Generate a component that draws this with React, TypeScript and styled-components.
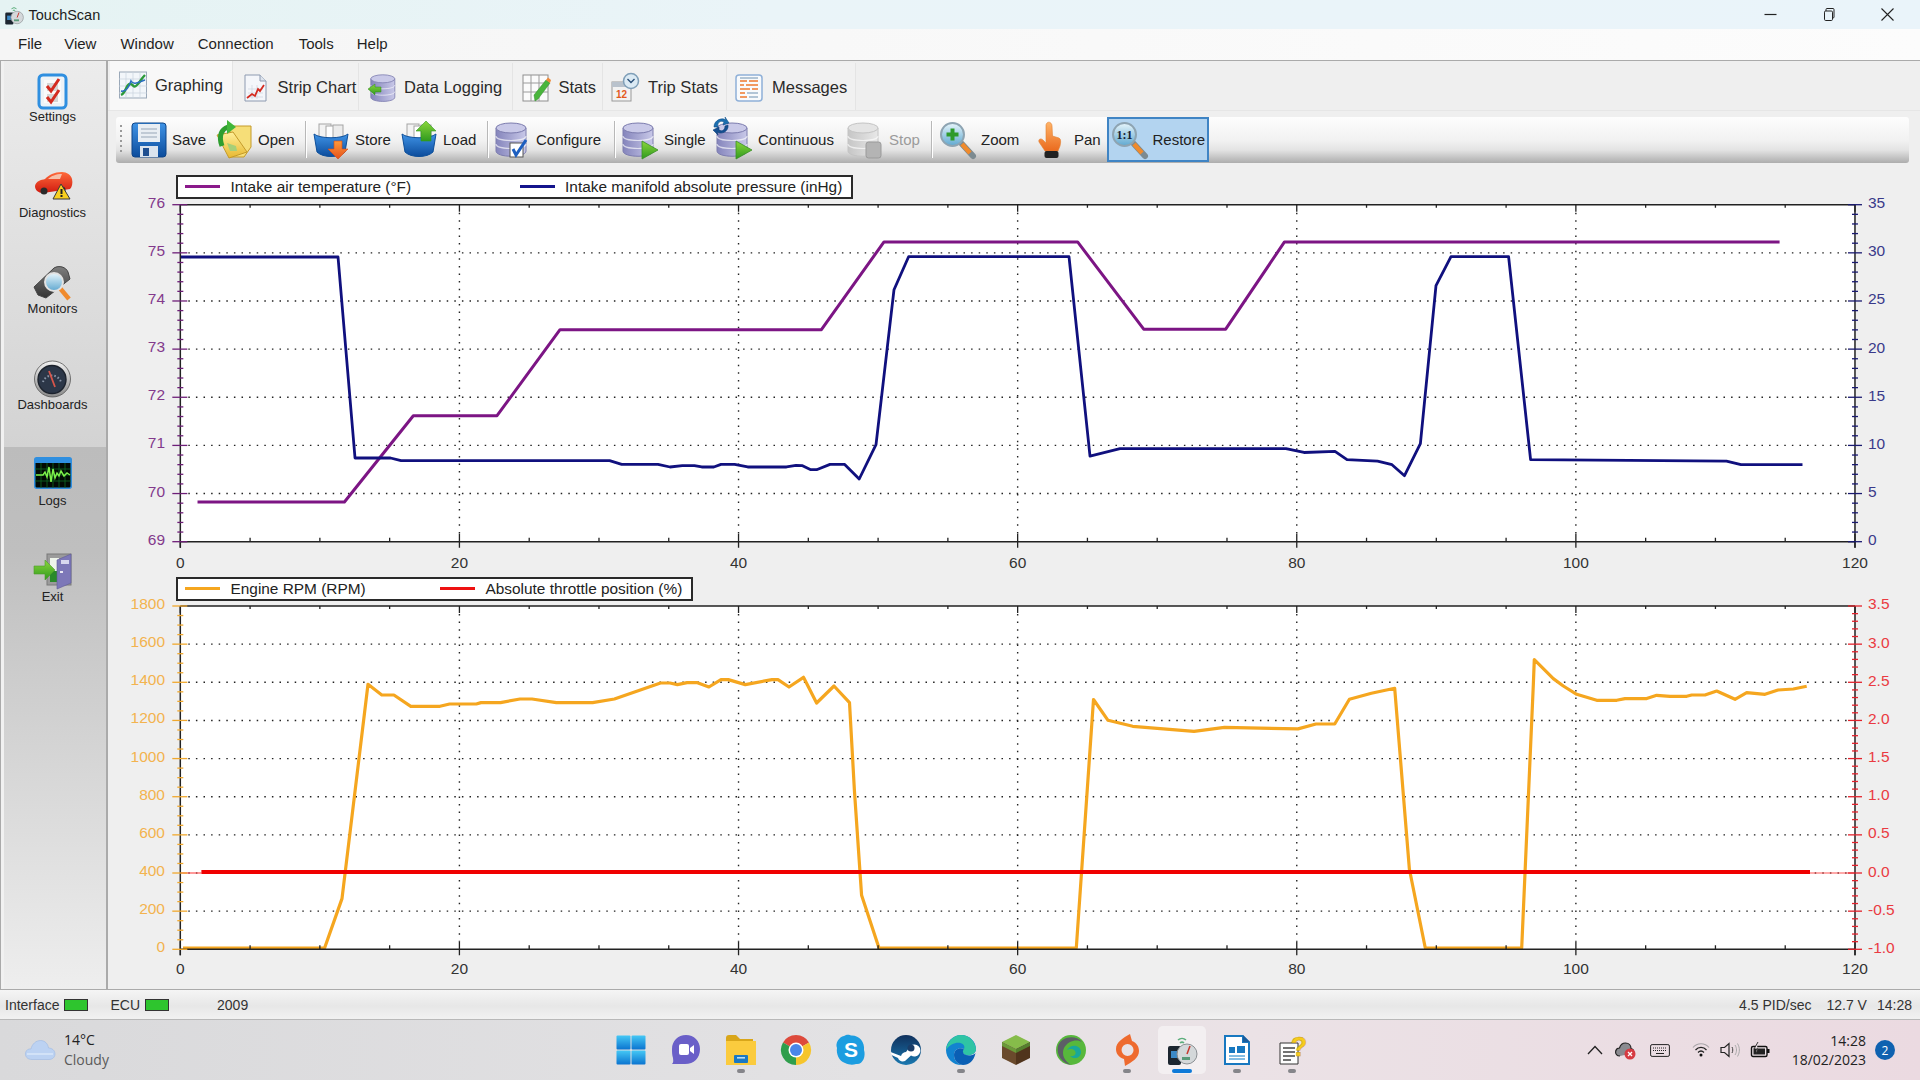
import React from "react";
import styled, { createGlobalStyle } from "styled-components";

const GlobalStyle = createGlobalStyle`
  html, body {
    margin: 0;
    padding: 0;
    width: 1920px;
    height: 1080px;
    overflow: hidden;
    font-family: "Liberation Sans", Arial, sans-serif;
    color: #222;
  }
  * { box-sizing: border-box; }
`;

/* ---------- icons ---------- */

const IconSvg = styled.svg`
  display: block;
  flex-shrink: 0;
  overflow: visible;
`;

const Ico = ({ w = 36, h = 36, box = "0 0 36 36", children }: any) => (
  <IconSvg width={w} height={h} viewBox={box}>
    {children}
  </IconSvg>
);

const DefsHolder = styled.svg`
  position: absolute;
  width: 0;
  height: 0;
`;

const grad = (id: string, a: string, b: string, horizontal = false) => (
  <linearGradient id={id} x1="0" y1="0" x2={horizontal ? "1" : "0"} y2={horizontal ? "0" : "1"}>
    <stop offset="0" stopColor={a} />
    <stop offset="1" stopColor={b} />
  </linearGradient>
);

const IconDefs = () => (
  <DefsHolder>
    <defs>
      {grad("gBlue", "#3f93e6", "#0c4c9c")}
      {grad("gLav", "#8585bc", "#c8c8e8", true)}
      {grad("gGray", "#c6c6c6", "#e8e8e8", true)}
      {grad("gGreen", "#8bd63c", "#2f9a1e")}
      {grad("gGold", "#fff09a", "#e8b830")}
      {grad("gOrange", "#ff9a3c", "#e4501a")}
      {grad("gHand", "#ffb468", "#ea6a1e")}
      {grad("gGlass", "#e8f6fc", "#5fa8d0")}
      {grad("gRed", "#ff6a3a", "#d01a10")}
      {grad("gWin", "#45c8f5", "#0b74d0")}
      {grad("gMetal", "#f2f2f2", "#8a8a8a")}
      {grad("gDark", "#7e7e7e", "#343434")}
      {grad("gEdge", "#35c1a0", "#0a63b8")}
      {grad("gSteam", "#10305c", "#1a78b0")}
    </defs>
  </DefsHolder>
);

const Db = ({ fill = "url(#gLav)", top = "#c9c9e8", stroke = "#7c7cae" }: any) => (
  <g>
    <path d="M1 6V29C1 36 31 36 31 29V6Z" fill={fill} stroke={stroke} />
    <path d="M1 14C1 20 31 20 31 14M1 22C1 28 31 28 31 22" fill="none" stroke="#fff" strokeOpacity=".65" strokeWidth="1.2" />
    <ellipse cx="16" cy="6" rx="15" ry="5" fill={top} stroke={stroke} />
  </g>
);

const SaveIcon = () => (
  <Ico>
    <rect x="1" y="1" width="34" height="34" rx="3" fill="url(#gBlue)" stroke="#0d4488" />
    <rect x="7" y="2" width="22" height="18" fill="#e9eef3" />
    <path d="M10 7h16M10 11h16M10 15h16" stroke="#b2bfcc" strokeWidth="1.6" />
    <rect x="9" y="24" width="18" height="11" fill="#dbe4ee" />
    <rect x="12" y="26" width="6" height="8" fill="#1f4f90" />
  </Ico>
);

const OpenIcon = () => (
  <Ico>
    <path d="M14 4H35V25L28 35H13Z" fill="#f6de78" stroke="#c49a2a" />
    <path d="M1 13L17 10L31 30L13 36Z" fill="url(#gGold)" stroke="#c49a2a" />
    <path d="M11 21L20 24L21 29L14 29Z" fill="#a6cf78" />
    <path d="M6 24C2 13 6 7 12 5" fill="none" stroke="#2f9e2f" strokeWidth="5" />
    <path d="M11-2L20 5L11 12Z" fill="#41b63a" />
  </Ico>
);

const Basket = () => (
  <g>
    <rect x="6" y="2" width="12" height="15" fill="#f3f3f3" stroke="#a5a5a5" />
    <rect x="13" y="4" width="12" height="13" fill="#fff" stroke="#a5a5a5" />
    <rect x="20" y="3" width="10" height="14" fill="#ececec" stroke="#a5a5a5" />
    <path d="M1 12C7 17 29 17 35 12L32 30C26 36 10 36 4 30Z" fill="url(#gBlue)" stroke="#0d4f9a" />
  </g>
);

const StoreIcon = () => (
  <Ico>
    <Basket />
    <path d="M21 19H29V27H35L25 37L15 27H21Z" fill="url(#gOrange)" stroke="#d84a14" strokeWidth=".6" />
  </Ico>
);

const LoadIcon = () => (
  <Ico>
    <Basket />
    <path d="M25-1L35 9H30V19H20V9H15Z" fill="url(#gGreen)" stroke="#2f9a1e" strokeWidth=".6" />
  </Ico>
);

const ConfigureIcon = () => (
  <Ico>
    <Db />
    <rect x="15" y="21" width="13" height="14" fill="#fff" stroke="#555" />
    <path d="M18 27L21 33L31 18" fill="none" stroke="#1d5fc0" strokeWidth="3" />
  </Ico>
);

const PlayMark = () => <path d="M20 19L36 28L20 37Z" fill="url(#gGreen)" stroke="#3a8f26" strokeWidth=".8" />;

const SingleIcon = () => (
  <Ico>
    <Db />
    <PlayMark />
  </Ico>
);

const ContinuousIcon = () => (
  <Ico>
    <Db />
    <PlayMark />
    <path d="M-2 5C-2-2 6-5 10-2L9-5L13 1L7 3L8 0C4-2 1 1 2 5Z" fill="#1c6fb0" stroke="#0e4f8a" strokeWidth=".6" />
    <path d="M12 3C13 9 6 13 1 10L2 13L-3 8L3 5L3 8C6 10 9 8 9 4Z" fill="#144f90" stroke="#0e3f7a" strokeWidth=".6" />
  </Ico>
);

const StopIcon = () => (
  <Ico>
    <Db fill="url(#gGray)" top="#e4e4e4" stroke="#c4c4c4" />
    <rect x="19" y="20" width="15" height="16" rx="2.5" fill="#b4b4b4" stroke="#9a9a9a" />
  </Ico>
);

const Lens = ({ children }: any) => (
  <g>
    <path d="M23 22L34 34" stroke="#7c8a90" strokeWidth="6" strokeLinecap="round" />
    <path d="M23 22L31 31" stroke="#f08a2c" strokeWidth="4.4" />
    <circle cx="13.5" cy="12.5" r="11.5" fill="url(#gGlass)" stroke="#8ea4b2" strokeWidth="2" />
    {children}
  </g>
);

const GlassText = styled.text`
  font-family: "Liberation Serif", serif;
  font-weight: 700;
  font-size: 12px;
  fill: #152034;
`;

const ZoomIcon = () => (
  <Ico>
    <Lens>
      <path d="M13.5 6.5V18.5M7.5 12.5H19.5" stroke="#2e9a2a" strokeWidth="4" />
    </Lens>
  </Ico>
);

const RestoreIcon = () => (
  <Ico>
    <Lens>
      <GlassText x="13.5" y="16.5" textAnchor="middle">
        1:1
      </GlassText>
    </Lens>
  </Ico>
);

const PanIcon = () => (
  <Ico>
    <path d="M15 1C17-1 20 1 20 4L20.5 14L27 16C29 17 29 20 28 24L26 29H13L7 20C6 17 9 16 11 18L14 21V4C14 3 14 2 15 1Z" fill="url(#gHand)" stroke="#e08030" strokeWidth=".6" />
    <rect x="12.5" y="29" width="14" height="7" rx="2" fill="#222" />
  </Ico>
);

const SettingsIcon = () => (
  <Ico>
    <rect x="4" y="2" width="27" height="33" rx="4" fill="#eef3f7" stroke="#2f8fe0" strokeWidth="3" />
    <rect x="9" y="7" width="17" height="23" fill="#fafafa" />
    <rect x="12" y="10" width="11" height="8" fill="#d6d6d6" />
    <rect x="12" y="21" width="11" height="8" fill="#d6d6d6" />
    <path d="M12 13L16 18L24 6M12 24L16 29L24 17" fill="none" stroke="#d42b20" strokeWidth="3" />
  </Ico>
);

const DiagnosticsIcon = () => (
  <Ico w={38} h={36} box="0 0 38 36">
    <path d="M1 17C2 12 7 11 11 10C15 6 20 3 28 3C33 3 37 6 38 10C39 14 38 18 36 20L9 24C4 24 1 21 1 17Z" fill="url(#gRed)" />
    <path d="M14 10C17 7 22 5 28 5L26 10Z" fill="#f6c0a8" />
    <circle cx="10" cy="22" r="3.5" fill="#2a2a2a" />
    <circle cx="28" cy="21" r="3.5" fill="#2a2a2a" />
    <path d="M27 15L36 30H19Z" fill="#f8d020" stroke="#3a3a3a" />
    <path d="M27.5 20V25M27.5 26V28" stroke="#222" strokeWidth="2" />
  </Ico>
);

const MonitorsIcon = () => (
  <Ico w={38} h={36} box="0 0 38 36">
    <path d="M0 22L20 3C25 0 32 2 34 7L36 14L12 33L4 30Z" fill="url(#gDark)" stroke="#444" />
    <path d="M25 22L35 34" stroke="#f08a2c" strokeWidth="4.5" />
    <circle cx="20" cy="17" r="9" fill="url(#gGlass)" stroke="#e2e2e2" strokeWidth="2" />
  </Ico>
);

const DashboardsIcon = () => (
  <Ico w={37} h={36} box="0 0 37 36">
    <circle cx="18.5" cy="18" r="18" fill="url(#gMetal)" stroke="#555" strokeWidth=".8" />
    <circle cx="18" cy="18.5" r="14" fill="#2c3748" stroke="#1c222c" strokeWidth="1.4" />
    <path d="M9 21A9.5 9.5 0 0 1 27 21" fill="none" stroke="#8a96a8" strokeWidth="2" strokeDasharray="1.5 2" />
    <path d="M15 10L21 26" stroke="#d8554a" strokeWidth="1.8" />
  </Ico>
);

const LogsIcon = () => (
  <Ico w={38} h={36} box="0 0 38 36">
    <rect x="0.75" y="0.75" width="36.5" height="30.5" rx="2" fill="#020a04" stroke="#2f8fe0" strokeWidth="1.5" />
    <rect x="1" y="1" width="36" height="5" fill="#2f8fe0" />
    <path d="M7 6V31M13 6V31M19 6V31M25 6V31M31 6V31M1 12H37M1 18H37M1 24H37" stroke="#0d6a24" strokeWidth=".8" />
    <path d="M2 18H9L11 15L13 20L15 10L17 25L19 12L21 21L23 16L25 19L27 14L30 19L33 16L36 18" fill="none" stroke="#7cf04a" strokeWidth="1.5" />
  </Ico>
);

const ExitIcon = () => (
  <Ico w={38} h={36} box="0 0 38 36">
    <rect x="13" y="1" width="24" height="31" fill="#9b9b9b" stroke="#7a7a7a" />
    <rect x="16" y="5" width="9" height="13" fill="#eef4ea" />
    <rect x="16" y="18" width="9" height="11" fill="#2a8a2a" />
    <path d="M23 7L37 1V30L23 36Z" fill="#7d78b8" stroke="#5f5a98" strokeWidth=".6" />
    <rect x="27" y="7" width="8" height="4" fill="#d8d8ee" />
    <rect x="26" y="18" width="3" height="2" fill="#e8e8f2" />
    <path d="M0 13H11V7L21 17L11 27V21H0Z" fill="url(#gGreen)" stroke="#4a9a2a" strokeWidth=".6" />
  </Ico>
);

const T = ({ children }: any) => (
  <Ico w={28} h={28} box="0 0 28 28">
    {children}
  </Ico>
);

const GraphingIcon = () => (
  <T>
    <rect x="0.5" y="1" width="27" height="26" fill="#f2f6fa" stroke="#9aa8b8" />
    <path d="M7 1V27M14 1V27M21 1V27M0 8H28M0 15H28M0 22H28" stroke="#c9d2dc" strokeWidth=".7" />
    <path d="M2 24C7 22 7 13 11 13C15 13 14 18 18 14C21 11 22 8 26 4" fill="none" stroke="#2c9a3a" strokeWidth="2.4" />
    <path d="M2 20C6 21 9 19 12 10C14 14 18 12 26 9" fill="none" stroke="#2a6fc0" strokeWidth="1.6" />
  </T>
);

const StripIcon = () => (
  <T>
    <path d="M4 1H19L25 7V27H4Z" fill="#f4f6fa" stroke="#8d9ab0" />
    <path d="M19 1V7H25" fill="#dde3ec" stroke="#8d9ab0" />
    <path d="M7 15H22M7 19H22M7 23H22M11 11V25M16 11V25" stroke="#c8d0dc" strokeWidth=".6" />
    <path d="M6 24L11 20L14 22L17 15L19 17L23 11" fill="none" stroke="#d42b20" strokeWidth="1.8" />
  </T>
);

const DataLogIcon = () => (
  <T>
    <g transform="translate(3 0) scale(.8)">
      <Db />
    </g>
    <path d="M1 15L8 10V13H14V18H8V21Z" fill="url(#gGreen)" stroke="#2f8a1e" strokeWidth=".5" />
  </T>
);

const StatsIcon = () => (
  <T>
    <rect x="1" y="1" width="25" height="26" fill="#fbfbfb" stroke="#8f8f8f" />
    <path d="M9 1V27M17 1V27M1 9H26M1 18H26" stroke="#9b9b9b" />
    <path d="M13 27L12 21L24 6L28 9L16 25Z" fill="#4ab53c" stroke="#2f8a28" strokeWidth=".5" />
    <path d="M24 6L26 3.5L29 6L28 9Z" fill="#ee8a3a" />
  </T>
);

const TripIcon = () => (
  <T>
    <rect x="1" y="8" width="19" height="19" fill="#f2f2f2" stroke="#9a9a9a" />
    <rect x="1" y="8" width="19" height="5" fill="#b9c2cc" />
    <text x="10.5" y="24" textAnchor="middle" fontSize="10" fontWeight="700" fontFamily="Liberation Sans" fill="#e4591e">
      12
    </text>
    <circle cx="20" cy="7" r="7.5" fill="#dbeaf4" stroke="#7f9fb8" strokeWidth="1.5" />
    <path d="M16.5 5L20 8.5L23.5 5" fill="none" stroke="#2a4f78" strokeWidth="1.4" />
  </T>
);

const MessagesIcon = () => (
  <T>
    <rect x="1" y="1" width="26" height="26" rx="3" fill="#f8fafc" stroke="#8fb0d8" strokeWidth="1.5" />
    <path d="M5 7H12M14 7H23M5 11H9M11 11H23M5 15H15M17 15H23M5 19H10M5 23H12" stroke="#ee7a2e" strokeWidth="1.5" />
    <path d="M5 4H23M12 19H23M14 23H23" stroke="#6d8fb0" strokeWidth="1.2" />
  </T>
);

const A = ({ children }: any) => (
  <Ico w={32} h={32} box="0 0 32 32">
    {children}
  </Ico>
);

const WinIcon = () => (
  <A>
    <rect x="1.5" y="1.5" width="14" height="14" rx="1" fill="url(#gWin)" />
    <rect x="16.5" y="1.5" width="14" height="14" rx="1" fill="url(#gWin)" />
    <rect x="1.5" y="16.5" width="14" height="14" rx="1" fill="url(#gWin)" />
    <rect x="16.5" y="16.5" width="14" height="14" rx="1" fill="url(#gWin)" />
  </A>
);

const ChatIcon = () => (
  <A>
    <path d="M16 1C24 1 30 7 30 15C30 24 24 30 15 30H2C4 28 3 26 3 24C2 21 2 18 2 15C2 7 8 1 16 1Z" fill="#6a5fc8" />
    <rect x="9" y="10" width="10" height="11" rx="2" fill="#fff" />
    <path d="M20 14L24 11V20L20 17Z" fill="#fff" />
  </A>
);

const FolderIcon = () => (
  <A>
    <path d="M1 4C1 2 2 1 4 1H11L15 5H28V9H1Z" fill="#d9a61a" />
    <path d="M1 7H31V31H1Z" fill="#fbcb3e" />
    <rect x="9" y="21" width="14" height="8" rx="1" fill="#1a78c4" />
    <rect x="12" y="23" width="8" height="1.6" fill="#b8dcf4" />
  </A>
);

const ChromeIcon = () => (
  <A>
    <path d="M16 16L3 8.5A15 15 0 0 1 29 8.5Z" fill="#dd4a3c" />
    <path d="M16 16L29 8.5A15 15 0 0 1 16 31Z" fill="#f6c52c" />
    <path d="M16 16L16 31A15 15 0 0 1 3 8.5Z" fill="#2f9e4c" />
    <circle cx="16" cy="16" r="7.5" fill="#fff" />
    <circle cx="16" cy="16" r="6" fill="#4a86e8" />
  </A>
);

const AppLetter = styled.text`
  font-family: "Liberation Sans", sans-serif;
  font-weight: 700;
  font-size: 21px;
  fill: #fff;
`;

const SkypeIcon = () => (
  <A>
    <path d="M9 2C12 0 15 1 16 1.5C24 1 30 8 29 16C31 22 28 31 21 30C18 31 14 31 10 29C4 27 1 20 2 14C0 9 4 3 9 2Z" fill="#1c9de0" />
    <AppLetter x="16" y="23" textAnchor="middle">
      S
    </AppLetter>
  </A>
);

const SteamIcon = () => (
  <A>
    <circle cx="16" cy="16" r="15" fill="url(#gSteam)" />
    <path d="M0.5 18L11 22C12 19 14 18 16 18L20.5 12A6 6 0 1 1 21 21.5L15 27C12 28 9 27 8 24L1.5 21Z" fill="#fff" />
    <circle cx="21" cy="14" r="3.5" fill="#1a3d68" />
  </A>
);

const EdgeIcon = () => (
  <A>
    <path d="M16 1C8 1 1 8 1 16C1 25 9 32 18 31C12 30 9 26 9 21C9 15 15 13 19 15C17 17 18 20 21 21C25 22 31 20 31 15C31 8 25 1 16 1Z" fill="#1283d0" />
    <path d="M1 16C2 8 8 1 16 1C24 1 30 7 31 15C31 20 25 22 21 21C18 20 17 17 19 15C22 8 8 5 1 16Z" fill="#2fc4a4" />
    <path d="M18 31C12 30 9 26 9 21C9 15 15 13 19 15C17 17 18 20 21 21C25 22 29 21 30.5 19C29 27 24 31 18 31Z" fill="#0a5fb4" />
  </A>
);

const BlockIcon = () => (
  <A>
    <path d="M16 1L30 8L16 15L2 8Z" fill="#86bc4a" />
    <path d="M2 8L16 15V31L2 24Z" fill="#6a4a2c" />
    <path d="M30 8L16 15V31L30 24Z" fill="#50341c" />
    <path d="M2 8L16 15V19L2 12Z" fill="#6a9a38" />
    <path d="M30 8L16 15V19L30 12Z" fill="#557f2e" />
  </A>
);

const SwirlIcon = () => (
  <A>
    <circle cx="16" cy="16" r="15" fill="#57b83c" />
    <path d="M3 12C6 3 20 0 27 8C23 5 13 6 9 14C6 21 10 27 16 31C7 29 1 21 3 12Z" fill="#5c5f66" />
    <path d="M12 16C16 9 26 11 26 18C26 24 19 26 15 22C19 23 22 20 20 17C18 14 14 15 12 16Z" fill="#18a89a" />
  </A>
);

const OriginIcon = () => (
  <A>
    <path d="M19 0L21 7C26 9 28 13 28 17C28 24 21 28 14 32L13 25C7 23 5 19 5 15C5 8 12 4 19 0ZM16.5 10A6 6 0 1 0 16.6 22A6 6 0 1 0 16.5 10Z" fill="#ee6a2e" fillRule="evenodd" />
  </A>
);

const TouchScanIcon = ({ size = 32 }: any) => (
  <Ico w={size} h={size} box="0 0 32 32">
    <path d="M12 6A6 6 0 0 1 20 6M14 9A3 3 0 0 1 18 9" fill="none" stroke="#5cae7c" strokeWidth="1.6" />
    <rect x="2" y="12" width="13" height="19" rx="2" fill="#1c2630" />
    <rect x="5" y="17" width="6" height="7" fill="#3c8ac8" />
    <circle cx="21" cy="20" r="10" fill="#d4d8da" stroke="#8b9094" />
    <path d="M21 20L24 12" stroke="#c83a30" strokeWidth="1.6" />
    <rect x="16" y="23" width="8" height="3" fill="#5a9a7a" />
  </Ico>
);

const LibreIcon = () => (
  <A>
    <path d="M3 1H22L29 8V31H3Z" fill="#1878c0" />
    <path d="M5 3H21V9H27V29H5Z" fill="#fff" />
    <path d="M22 1L29 8H22Z" fill="#1a5c9c" />
    <path d="M8 13H14V19H8ZM16 12L24 12V19H16Z" fill="#1878c0" />
    <path d="M8 22H24M8 25H24" stroke="#5aa8dc" strokeWidth="1.6" />
  </A>
);

const HelpDocIcon = () => (
  <A>
    <path d="M4 9H22V30H4Z" fill="#fdfdfd" stroke="#333" />
    <path d="M7 14H19M7 18H19M7 22H19M7 26H15" stroke="#444" strokeWidth="1.6" />
    <text x="23" y="22" textAnchor="middle" fontSize="27" fontWeight="700" fontFamily="Liberation Sans" fill="#f6cc1e" stroke="#c89a10" strokeWidth=".5">
      ?
    </text>
  </A>
);

const CloudIcon = () => (
  <Ico w={30} h={20} box="0 0 30 20">
    <path d="M7 19.5C2 19.5 0 16 0.5 13C1 10 3.5 8.5 6 9C7 4 11 0.5 15.5 0.5C20 0.5 23 4 23.5 8C27 8 30 10.5 30 14C30 17.5 27 19.5 24 19.5Z" fill="#bcd2f2" stroke="#9cb8e4" strokeWidth=".6" />
    <path d="M2 14H28" stroke="#d8e6f8" strokeWidth="1.6" />
  </Ico>
);

const LineSvg = ({ w, h, children, $ml }: any) => (
  <TrayCell $ml={$ml} $w={w}>
    <Ico w={w} h={h} box={`0 0 ${w} ${h}`}>
      {children}
    </Ico>
  </TrayCell>
);

/* ---------- chart ---------- */

const AxisText = styled.text<{ $color: string }>`
  font-family: "Liberation Sans", Arial, sans-serif;
  font-size: 15.5px;
  fill: ${(p) => p.$color};
  dominant-baseline: central;
`;

const ChartSvg = styled.svg`
  display: block;
  overflow: visible;
  flex-shrink: 0;
`;

const X0 = 180.3;
const X1 = 1855;

type Axis = {
  labels: string[];
  minors: number;
  color: string;
  tick: string;
};

type Series = {
  points: number[][];
  color: string;
  width: number;
};

const toLine = (pts: number[][]) => pts.map((p) => p.join(",")).join(" ");

const Chart = ({
  originY,
  height,
  top,
  bottom,
  left,
  right,
  series,
  xLabelOffset,
}: {
  originY: number;
  height: number;
  top: number;
  bottom: number;
  left: Axis;
  right: Axis;
  series: Series[];
  xLabelOffset: number;
}) => {
  const xs = Array.from({ length: 25 }, (_, i) => i * 5);
  const xPos = (v: number) => X0 + (v * (X1 - X0)) / 120;

  const yTicks = (axis: Axis) => {
    const count = (axis.labels.length - 1) * axis.minors;
    return Array.from({ length: count + 1 }, (_, i) => ({
      y: bottom - (i * (bottom - top)) / count,
      major: i % axis.minors === 0,
      label: i % axis.minors === 0 ? axis.labels[i / axis.minors] : null,
    }));
  };

  const rows = yTicks(left).filter((t) => t.major);

  return (
    <ChartSvg width={1812} height={height} viewBox={`108 ${originY} 1812 ${height}`}>
      <rect x={X0} y={top} width={X1 - X0} height={bottom - top} fill="#fff" />

      {rows.slice(1, -1).map((t) => (
        <line key={t.y} x1={X0 + 8} x2={X1 - 8} y1={t.y} y2={t.y} stroke="#222" strokeWidth="1.4" strokeDasharray="1.5 6.1" />
      ))}
      {[20, 40, 60, 80, 100].map((v) => (
        <line key={v} x1={xPos(v)} x2={xPos(v)} y1={top + 8} y2={bottom - 8} stroke="#222" strokeWidth="1.4" strokeDasharray="1.5 6.1" />
      ))}

      {series.map((s, i) => (
        <polyline key={i} points={toLine(s.points)} fill="none" stroke={s.color} strokeWidth={s.width} strokeLinejoin="round" />
      ))}

      <path d={`M${X0} ${top}H${X1}M${X0} ${bottom}H${X1}M${X0} ${top}V${bottom + 6}M${X1} ${top}V${bottom + 6}`} stroke="#222" strokeWidth="1.5" fill="none" />

      {xs.map((v) => {
        const major = v % 20 === 0;
        return (
          <path
            key={v}
            d={`M${xPos(v)} ${top}v${major ? 7 : 3}M${xPos(v)} ${bottom}v${major ? -8 : -4}${major ? `M${xPos(v)} ${bottom}v6` : ""}`}
            stroke="#222"
            strokeWidth="1.3"
          />
        );
      })}
      {xs
        .filter((v) => v % 20 === 0)
        .map((v) => (
          <AxisText key={v} $color="#333" x={xPos(v)} y={bottom + xLabelOffset} textAnchor="middle">
            {v}
          </AxisText>
        ))}

      {yTicks(left).map((t) => (
        <g key={t.y}>
          <line x1={X0 - (t.major ? 8 : 3)} x2={X0 + (t.major ? 7 : 3)} y1={t.y} y2={t.y} stroke={left.tick} strokeWidth="1.3" />
          {t.label && (
            <AxisText $color={left.color} x={165} y={t.y - 2.5} textAnchor="end">
              {t.label}
            </AxisText>
          )}
        </g>
      ))}
      {yTicks(right).map((t) => (
        <g key={t.y}>
          <line x1={X1 - (t.major ? 7 : 3)} x2={X1 + (t.major ? 7 : 3)} y1={t.y} y2={t.y} stroke={right.tick} strokeWidth="1.3" />
          {t.label && (
            <AxisText $color={right.color} x={1868} y={t.y - 2}>
              {t.label}
            </AxisText>
          )}
        </g>
      ))}
    </ChartSvg>
  );
};

const airTemp = [
  [197.5, 501.3], [344.4, 501.3], [413.3, 415], [497, 415], [560, 329], [821.4, 329], [884, 241.2],
  [1077.6, 241.2], [1143.7, 328.5], [1225.7, 328.5], [1284.5, 241.2], [1779.6, 241.2],
];

const manifold = [
  [180.3, 256.3], [338, 256.3], [355, 457.3], [390.5, 457.3], [401, 460], [609.6, 460], [621.7, 463.7], [658, 463.7],
  [670, 466.3], [682.3, 465], [694.4, 465], [701.7, 466.3], [713.8, 466.3], [721, 463.7], [734.6, 463.7], [747.7, 466.3],
  [786.5, 466.3], [796, 464.7], [802.5, 465], [810.8, 469], [816.6, 469], [830, 463.7], [844.7, 463.7], [859.2, 478.3],
  [876, 444], [894, 289], [908.6, 256], [1069, 256], [1090, 455.5], [1120, 448], [1286, 448], [1304, 451.8], [1335, 450.6],
  [1347, 459], [1377.6, 460.4], [1392, 464], [1404.5, 475], [1420.4, 443], [1436, 285], [1451, 256], [1508.6, 256],
  [1530.6, 459], [1726.5, 460.4], [1741, 464], [1802.5, 464],
];

const rpm = [
  [183, 947.7], [324.6, 947.7], [342, 898.3], [368, 684], [381.8, 694.7], [393.9, 694.7], [410.8, 706], [440, 706],
  [449.6, 703.7], [476.3, 703.7], [481, 702.3], [500.5, 702.3], [520, 698.7], [532, 698.7], [556.3, 702.3], [592.6, 702.3],
  [614.4, 698.7], [660.5, 682.7], [670, 682.7], [677.4, 684.3], [687, 682.3], [696.8, 682.3], [708.9, 686.7], [721, 679.3],
  [728.3, 679.3], [745.3, 684.3], [772, 679.3], [778, 679.3], [789, 686.7], [803.5, 677], [816.6, 702.7], [834, 685.7],
  [849.5, 702.3], [854.4, 790], [861.6, 895], [879, 947.7], [1076.3, 947.7], [1093.5, 699.2], [1108, 720], [1132.7, 726],
  [1194, 731], [1224.5, 727], [1298, 728.6], [1316, 723.7], [1334.7, 723.7], [1349.4, 699], [1371.4, 693], [1394.7, 688],
  [1409.4, 869], [1425.3, 947.7], [1521.7, 947.7], [1533.3, 685], [1534.3, 659.3], [1553.3, 678.3], [1563.3, 685.7],
  [1576.7, 694], [1596.7, 700], [1616.7, 700], [1625, 698.3], [1646.7, 698.3], [1656.7, 695], [1670, 696], [1686.7, 696],
  [1691.7, 694.7], [1705, 694.7], [1716.7, 690.7], [1735, 699], [1746.7, 692.3], [1765, 694], [1778, 689.7], [1793.3, 688.7],
  [1806.7, 686],
];

const PURPLE = "#7c1584";
const NAVY = "#10107e";
const ORANGE = "#f5a61f";
const RED = "#f00000";

/* ---------- page ---------- */

const Page = styled.div`
  position: relative;
  width: 1920px;
  height: 1080px;
  display: flex;
  flex-direction: column;
  overflow: hidden;
  background: #efefef;
`;

const TitleBar = styled.div`
  height: 29px;
  display: flex;
  align-items: center;
  padding-left: 4px;
  background: linear-gradient(90deg, #e5f3f3, #eaf4f8 40%, #eaf4fa);
`;

const AppTitle = styled.span`
  font-size: 14.5px;
  margin-left: 4.5px;
  color: #1c1c1c;
`;

const WindowButtons = styled.div`
  margin-left: auto;
  padding-right: 3px;
  display: flex;
  align-items: center;
`;

const WindowButton = styled.div`
  width: 58.5px;
  height: 29px;
  display: flex;
  align-items: center;
  justify-content: center;
`;

const MenuBar = styled.div`
  height: 31px;
  padding-bottom: 2px;
  display: flex;
  align-items: center;
  background: linear-gradient(90deg, #f5f5f5, #fcfcfc);
  font-size: 15px;
`;

const MenuItem = styled.span<{ $x: number }>`
  margin-left: ${(p) => p.$x}px;
  color: #1f1f1f;
`;

const Main = styled.div`
  height: 930px;
  display: flex;
  border-top: 1px solid #aaa;
  border-bottom: 1px solid #aaa;
`;

const SidebarFrame = styled.div`
  width: 108px;
  flex-shrink: 0;
  padding-left: 3px;
  background: #f1f1f1;
  border-left: 1px solid #aaa;
  border-right: 2px solid #aaa;
  display: flex;
`;

const Sidebar = styled.div`
  flex: 1;
  padding-top: 2px;
  background: linear-gradient(
    #ececec 0,
    #d3d3d3 386px,
    #bcbcbc 386px,
    #bfbfbf 490px,
    #eeeeee 100%
  );
`;

const SideItem = styled.div`
  height: 96px;
  padding: 10px 5px 0 0;
  display: flex;
  flex-direction: column;
  align-items: center;
`;

const SideLabel = styled.span`
  font-size: 13px;
  line-height: 16px;
  color: #222;
`;

const Content = styled.div`
  flex: 1;
  min-width: 0;
  display: flex;
  flex-direction: column;
`;

const TabRow = styled.div`
  height: 50px;
  display: flex;
  align-items: flex-end;
  padding-left: 2px;
  border-bottom: 1px solid #e6e6e6;
`;

const Tab = styled.div<{ $w: number; $active?: boolean }>`
  width: ${(p) => p.$w}px;
  height: ${(p) => (p.$active ? 49 : 47)}px;
  display: flex;
  align-items: center;
  gap: 8.5px;
  padding-left: 8.5px;
  padding-top: ${(p) => (p.$active ? 0 : 2)}px;
  padding-bottom: ${(p) => (p.$active ? 1 : 0)}px;
  background: ${(p) => (p.$active ? "#f8f8f8" : "#f1f1f1")};
  border-right: 1px solid #e4e4e4;
  font-size: 16.5px;
  color: #2a2a2a;
  white-space: nowrap;
`;

const Toolbar = styled.div`
  position: relative;
  height: 46.5px;
  margin: 5.5px 11px 0 8px;
  padding-left: 15px;
  display: flex;
  align-items: center;
  border-radius: 3px;
  background: linear-gradient(#fdfdfd, #f1f1f1 52%, #e3e3e3 72%, #adadad);
`;

const Gripper = styled.div`
  position: absolute;
  left: 4px;
  top: 8px;
  width: 2px;
  height: 30px;
  background: repeating-linear-gradient(#9a9a9a 0 2px, transparent 2px 5px);
`;

const ToolButton = styled.div<{ $w: number; $gap?: number; $active?: boolean; $disabled?: boolean }>`
  width: ${(p) => p.$w}px;
  height: ${(p) => (p.$active ? "45px" : "auto")};
  display: flex;
  align-items: center;
  gap: ${(p) => p.$gap ?? 6}px;
  padding-left: ${(p) => (p.$active ? 2 : 0)}px;
  font-size: 15px;
  color: ${(p) => (p.$disabled ? "#9b9b9b" : "#222")};
  white-space: nowrap;
  ${(p) => (p.$active ? "background: #b3d4f0; border: 2px solid #3f84c4;" : "")}
`;

const ToolSep = styled.div`
  width: 2px;
  height: 37px;
  margin: 0 6px 0 1px;
  flex-shrink: 0;
  background: linear-gradient(90deg, #b8b8b8 50%, #fff 50%);
`;

const Legend = styled.div<{ $top: number; $width: number; $lift?: number }>`
  width: ${(p) => p.$width}px;
  height: 24px;
  margin: ${(p) => p.$top}px 0 0 68px;
  padding-left: 7px;
  padding-bottom: ${(p) => p.$lift ?? 0}px;
  flex-shrink: 0;
  display: flex;
  align-items: center;
  background: #fff;
  border: 2px solid #2a2a2a;
  font-size: 15.4px;
  color: #222;
`;

const LegendItem = styled.div<{ $w?: number }>`
  display: flex;
  align-items: center;
  gap: 10.5px;
  flex-shrink: 0;
  white-space: nowrap;
  width: ${(p) => (p.$w ? `${p.$w}px` : "auto")};
`;

const Swatch = styled.span<{ $color: string }>`
  width: 35px;
  height: 3px;
  background: ${(p) => p.$color};
  flex-shrink: 0;
`;

const StatusBar = styled.div`
  height: 30px;
  display: flex;
  align-items: center;
  padding: 0 8px 0 5px;
  border-bottom: 1px solid #b8b8b8;
  background: linear-gradient(#f5f5f5, #e7e7e7 55%, #f1f1f1);
  font-size: 14px;
  color: #333;
`;

const Led = styled.span`
  width: 24px;
  height: 12px;
  margin-left: 5px;
  background: #2ec52e;
  border: 1px solid #333;
`;

const StatusText = styled.span<{ $ml?: number }>`
  margin-left: ${(p) => p.$ml ?? 0}px;
  white-space: nowrap;
`;

const StatusRight = styled.div`
  margin-left: auto;
  display: flex;
  align-items: center;
`;

const TaskBar = styled.div`
  height: 60px;
  display: flex;
  align-items: center;
  background: linear-gradient(90deg, #d9d9db, #e3e2e4 45%, #ebe2e6 65%, #ebdae1);
`;

const Weather = styled.div`
  width: 603px;
  flex-shrink: 0;
  display: flex;
  align-items: center;
  gap: 9px;
  padding-left: 25px;
`;

const WeatherText = styled.div`
  display: flex;
  flex-direction: column;
  font-family: "Open Sans", sans-serif;
  font-size: 14px;
  line-height: 20px;
  color: #222;
`;

const WeatherSub = styled.span`
  color: #5a5a5a;
`;

const TaskTile = styled.div`
  position: relative;
  width: 55.12px;
  height: 60px;
  display: flex;
  align-items: center;
  justify-content: center;
`;

const TileFace = styled.div<{ $active?: boolean }>`
  width: 48px;
  height: 48px;
  border-radius: 5px;
  display: flex;
  align-items: center;
  justify-content: center;
  background: ${(p) => (p.$active ? "#f3eff1" : "transparent")};
`;

const RunDot = styled.span<{ $active?: boolean }>`
  position: absolute;
  bottom: 7px;
  left: 50%;
  transform: translateX(-50%);
  width: ${(p) => (p.$active ? 20 : 8)}px;
  height: 4px;
  border-radius: 2px;
  background: ${(p) => (p.$active ? "#0f7ad8" : "#85858a")};
`;

const Tray = styled.div`
  margin-left: auto;
  padding-right: 25px;
  display: flex;
  align-items: center;
`;

const TrayCell = styled.div<{ $ml?: number; $w: number }>`
  width: ${(p) => p.$w}px;
  margin-left: ${(p) => p.$ml ?? 0}px;
  display: flex;
  justify-content: center;
  flex-shrink: 0;
`;

const Clock = styled.div`
  width: 96px;
  text-align: right;
  font-family: "Open Sans", sans-serif;
  font-size: 14px;
  line-height: 19.5px;
  color: #222;
`;

const Badge = styled.div`
  width: 20px;
  height: 20px;
  margin-left: 9px;
  border-radius: 50%;
  background: #0f62b0;
  color: #fff;
  font-family: "Open Sans", sans-serif;
  font-size: 12px;
  display: flex;
  align-items: center;
  justify-content: center;
`;

const menu: [string, number][] = [
  ["File", 18],
  ["View", 22],
  ["Window", 24],
  ["Connection", 24],
  ["Tools", 25],
  ["Help", 23],
];

const sideItems: [string, React.ReactNode][] = [
  ["Settings", <SettingsIcon />],
  ["Diagnostics", <DiagnosticsIcon />],
  ["Monitors", <MonitorsIcon />],
  ["Dashboards", <DashboardsIcon />],
  ["Logs", <LogsIcon />],
  ["Exit", <ExitIcon />],
];

const tabs: [string, number, React.ReactNode][] = [
  ["Graphing", 122.6, <GraphingIcon />],
  ["Strip Chart", 126.4, <StripIcon />],
  ["Data Logging", 154.5, <DataLogIcon />],
  ["Stats", 89.5, <StatsIcon />],
  ["Trip Stats", 124, <TripIcon />],
  ["Messages", 129, <MessagesIcon />],
];

const apps: [React.ReactNode, string?][] = [
  [<WinIcon />],
  [<ChatIcon />],
  [<FolderIcon />, "run"],
  [<ChromeIcon />],
  [<SkypeIcon />],
  [<SteamIcon />],
  [<EdgeIcon />, "run"],
  [<BlockIcon />],
  [<SwirlIcon />],
  [<OriginIcon />, "run"],
  [<TouchScanIcon />, "active"],
  [<LibreIcon />, "run"],
  [<HelpDocIcon />, "run"],
];

const App = () => (
  <Page>
    <GlobalStyle />
    <IconDefs />

    <TitleBar>
      <TouchScanIcon size={20} />
      <AppTitle>TouchScan</AppTitle>
      <WindowButtons>
        <WindowButton>
          <Ico w={13} h={13} box="0 0 13 13">
            <path d="M0.5 6.5H12.5" stroke="#222" strokeWidth="1.2" />
          </Ico>
        </WindowButton>
        <WindowButton>
          <Ico w={13} h={13} box="0 0 13 13">
            <path d="M3 3V1.5Q3 .5 4 .5H10Q11 .5 11 1.5V9Q11 10 10 10H9" fill="none" stroke="#222" />
            <rect x="1.5" y="3" width="8" height="9.5" rx="1.2" fill="none" stroke="#222" />
          </Ico>
        </WindowButton>
        <WindowButton>
          <Ico w={13} h={13} box="0 0 13 13">
            <path d="M.5 .5L12.5 12.5M12.5 .5L.5 12.5" stroke="#222" strokeWidth="1.1" />
          </Ico>
        </WindowButton>
      </WindowButtons>
    </TitleBar>

    <MenuBar>
      {menu.map(([label, x]) => (
        <MenuItem key={label} $x={x}>
          {label}
        </MenuItem>
      ))}
    </MenuBar>

    <Main>
      <SidebarFrame>
        <Sidebar>
          {sideItems.map(([label, icon]) => (
            <SideItem key={label}>
              {icon}
              <SideLabel>{label}</SideLabel>
            </SideItem>
          ))}
        </Sidebar>
      </SidebarFrame>

      <Content>
        <TabRow>
          {tabs.map(([label, w, icon], i) => (
            <Tab key={label} $w={w} $active={i === 0}>
              {icon}
              {label}
            </Tab>
          ))}
        </TabRow>

        <Toolbar>
          <Gripper />
          <ToolButton $w={85} $gap={5}><SaveIcon />Save</ToolButton>
          <ToolButton $w={88}><OpenIcon />Open</ToolButton>
          <ToolSep />
          <ToolButton $w={88}><StoreIcon />Store</ToolButton>
          <ToolButton $w={85}><LoadIcon />Load</ToolButton>
          <ToolSep />
          <ToolButton $w={118} $gap={5}><ConfigureIcon />Configure</ToolButton>
          <ToolSep />
          <ToolButton $w={94}><SingleIcon />Single</ToolButton>
          <ToolButton $w={131}><ContinuousIcon />Continuous</ToolButton>
          <ToolButton $w={83} $disabled><StopIcon />Stop</ToolButton>
          <ToolSep />
          <ToolButton $w={93} $gap={6}><ZoomIcon />Zoom</ToolButton>
          <ToolButton $w={74.5}><PanIcon />Pan</ToolButton>
          <ToolButton $w={102} $active $gap={6}><RestoreIcon />Restore</ToolButton>
        </Toolbar>

        <Legend $top={11.7} $width={677.3}>
          <LegendItem $w={334.6}>
            <Swatch $color="#8b1a8b" />
            Intake air temperature (°F)
          </LegendItem>
          <LegendItem>
            <Swatch $color="#14148c" />
            Intake manifold absolute pressure (inHg)
          </LegendItem>
        </Legend>
        <Chart
          originY={198.3}
          height={378.4}
          top={204}
          bottom={541}
          xLabelOffset={21}
          left={{ labels: ["69", "70", "71", "72", "73", "74", "75", "76"], minors: 5, color: "#833a8c", tick: "#6e1f78" }}
          right={{ labels: ["0", "5", "10", "15", "20", "25", "30", "35"], minors: 5, color: "#3a3a8a", tick: "#1a1a70" }}
          series={[
            { points: airTemp, color: PURPLE, width: 3 },
            { points: manifold, color: NAVY, width: 2.8 },
          ]}
        />

        <Legend $top={0} $width={516.7} $lift={1}>
          <LegendItem $w={255}>
            <Swatch $color={ORANGE} />
            Engine RPM (RPM)
          </LegendItem>
          <LegendItem>
            <Swatch $color="#ee1111" />
            Absolute throttle position (%)
          </LegendItem>
        </Legend>
        <Chart
          originY={600.7}
          height={384}
          top={605.7}
          bottom={949}
          xLabelOffset={19}
          left={{ labels: ["0", "200", "400", "600", "800", "1000", "1200", "1400", "1600", "1800"], minors: 4, color: "#f3b34e", tick: "#f0a82e" }}
          right={{ labels: ["-1.0", "-0.5", "0.0", "0.5", "1.0", "1.5", "2.0", "2.5", "3.0", "3.5"], minors: 5, color: "#ea3a42", tick: "#e3222c" }}
          series={[
            { points: [[180.3, 872.7], [201.4, 872.7]], color: "#f55", width: 1.2 },
            { points: [[1810, 872.7], [1855, 872.7]], color: "#f55", width: 1.2 },
            { points: rpm, color: ORANGE, width: 3.2 },
            { points: [[201.4, 871.7], [1810, 871.7]], color: RED, width: 3.8 },
          ]}
        />
      </Content>
    </Main>

    <StatusBar>
      <StatusText>Interface</StatusText>
      <Led />
      <StatusText $ml={22}>ECU</StatusText>
      <Led />
      <StatusText $ml={48}>2009</StatusText>
      <StatusRight>
        <StatusText>4.5 PID/sec</StatusText>
        <StatusText $ml={15}>12.7 V</StatusText>
        <StatusText $ml={10}>14:28</StatusText>
      </StatusRight>
    </StatusBar>

    <TaskBar>
      <Weather>
        <CloudIcon />
        <WeatherText>
          14°C
          <WeatherSub>Cloudy</WeatherSub>
        </WeatherText>
      </Weather>
      {apps.map(([icon, state], i) => (
        <TaskTile key={i}>
          <TileFace $active={state === "active"}>{icon}</TileFace>
          {state && <RunDot $active={state === "active"} />}
        </TaskTile>
      ))}
      <Tray>
        <LineSvg w={16} h={10}>
          <path d="M1 9L8 1.5L15 9" fill="none" stroke="#222" strokeWidth="1.3" />
        </LineSvg>
        <LineSvg w={21} h={18} $ml={12}>
          <path d="M5 15C2 15 0 13 .7 10C1.2 8 3 7 4.5 7C5.5 3.5 8 2 10.5 2C14 2 16 4.5 16 7.5C18 8 19 10 18.5 12" fill="#8b8b90" stroke="#222" strokeWidth="1.2" />
          <circle cx="15" cy="13" r="5.5" fill="#d63b42" />
          <path d="M13 11L17 15M17 11L13 15" stroke="#fff" strokeWidth="1.3" />
        </LineSvg>
        <LineSvg w={20} h={13} $ml={14}>
          <rect x=".6" y=".6" width="18.8" height="11.8" rx="1.5" fill="none" stroke="#222" />
          <path d="M3 4H17M3 6.5H17" stroke="#222" strokeWidth="1" strokeDasharray="1 1" />
          <path d="M6 9.5H14" stroke="#222" />
        </LineSvg>
        <LineSvg w={18} h={14} $ml={22}>
          <path d="M1 4.5C5-.5 13-.5 17 4.5" fill="none" stroke="#a8a4a8" strokeWidth="1.2" />
          <path d="M3.5 7C6.5 3.5 11.5 3.5 14.5 7M6 9.5C8 7.5 10 7.5 12 9.5" fill="none" stroke="#222" strokeWidth="1.2" />
          <circle cx="9" cy="12" r="1.5" fill="#111" />
        </LineSvg>
        <LineSvg w={20} h={16} $ml={10}>
          <path d="M1 5.5H4.5L9 1.5V14.5L4.5 10.5H1Z" fill="none" stroke="#222" strokeWidth="1.2" />
          <path d="M12 5C13 6.5 13 9.5 12 11" fill="none" stroke="#444" />
          <path d="M15 3C17 6 17 10 15 13M17.5 1.5C20 6 20 10 17.5 14.5" fill="none" stroke="#aaa" />
        </LineSvg>
        <LineSvg w={20} h={16} $ml={10}>
          <rect x="1.5" y="4.5" width="15.5" height="10" rx="1.5" fill="#ece2e6" stroke="#111" strokeWidth="1.4" />
          <rect x="3.5" y="6.5" width="11.5" height="6" fill="#222" />
          <rect x="17" y="7" width="2.5" height="4" fill="#111" />
          <path d="M8 0L4 7H8L6 12" fill="#ece2e6" stroke="#222" strokeWidth=".9" />
        </LineSvg>
        <Clock>
          14:28
          <br />
          18/02/2023
        </Clock>
        <Badge>2</Badge>
      </Tray>
    </TaskBar>
  </Page>
);

export default App;
